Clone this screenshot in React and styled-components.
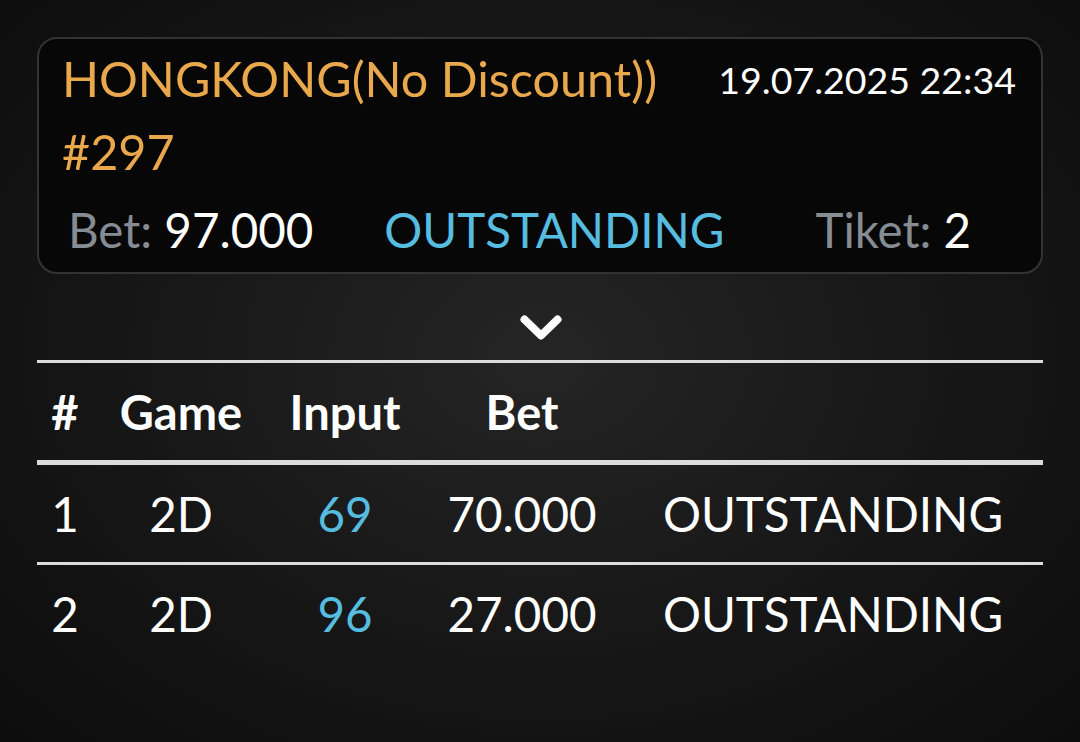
import React from 'react';
import styled, { createGlobalStyle } from 'styled-components';

const GlobalStyle = createGlobalStyle`
  html, body {
    margin: 0;
    padding: 0;
  }

  body {
    min-height: 100vh;
    background: radial-gradient(ellipse 75% 80% at 50% 48%, #252525 0%, #181818 45%, #0b0b0b 100%);
    font-family: Lato, "Open Sans", sans-serif;
    color: #ffffff;
  }
`

const Page = styled.div`
  padding: 37px 37px 0;
`

const Card = styled.div`
  background: #070707;
  border: 2px solid #333333;
  border-radius: 20px;
  padding: 3px 25px 6px 23px;
`

const TopRow = styled.div`
  display: flex;
  justify-content: space-between;
  align-items: flex-start;
`

const Title = styled.div`
  color: #eaa84c;
  font-size: 48.5px;
  line-height: 73px;
`

const DateText = styled.div`
  font-size: 37.5px;
  line-height: 73px;
  margin-top: 1px;
  color: #ffffff;
`

const StatsRow = styled.div`
  display: flex;
  align-items: baseline;
  margin-top: 5px;
  padding-left: 6px;
  font-size: 47.5px;
  line-height: 73px;
`

const Stat = styled.div`
  margin-left: ${(p) => p.$offset || 0}px;
  color: ${(p) => p.$color || '#ffffff'};
  white-space: nowrap;
`

const Label = styled.span`
  color: #868c93;
`

const Toggle = styled.div`
  display: flex;
  justify-content: center;
  padding: 41px 0 19px 2px;

  svg {
    display: block;
  }
`

const Table = styled.div`
  display: flex;
  flex-direction: column;
`

const Row = styled.div`
  display: grid;
  grid-template-columns: 56px 176px 152px 202px 1fr;
  align-items: center;
  height: 97px;
  font-size: ${(p) => (p.$head ? 47 : 47.5)}px;
  font-weight: ${(p) => (p.$head ? 700 : 400)};
  border-top: ${(p) => p.$borderTop || 0}px solid #dcdcdc;
  border-bottom: ${(p) => p.$borderBottom || 0}px solid #dcdcdc;
`

const Cell = styled.div`
  text-align: center;
  white-space: nowrap;
  color: ${(p) => (p.$accent ? '#56bde0' : '#ffffff')};
`

const tickets = [
  { no: 1, game: '2D', input: '69', bet: '70.000', status: 'OUTSTANDING' },
  { no: 2, game: '2D', input: '96', bet: '27.000', status: 'OUTSTANDING' },
];

function App() {
  return (
    <>
      <GlobalStyle />
      <Page>
        <Card>
          <TopRow>
            <Title>
              HONGKONG(No Discount))
              <br />
              #297
            </Title>
            <DateText>19.07.2025 22:34</DateText>
          </TopRow>
          <StatsRow>
            <Stat><Label>Bet:</Label> 97.000</Stat>
            <Stat $offset={71} $color="#56bde0">OUTSTANDING</Stat>
            <Stat $offset={91}><Label>Tiket:</Label> 2</Stat>
          </StatsRow>
        </Card>

        <Toggle>
          <svg width="42" height="26" viewBox="0 0 42 26">
            <polyline
              points="4.5,4.5 21,20.5 37.5,4.5"
              fill="none"
              stroke="#ffffff"
              strokeWidth="8"
              strokeLinecap="round"
              strokeLinejoin="round"
            />
          </svg>
        </Toggle>

        <Table>
          <Row $head $borderTop={3} $borderBottom={5}>
            <Cell>#</Cell>
            <Cell>Game</Cell>
            <Cell>Input</Cell>
            <Cell>Bet</Cell>
            <Cell />
          </Row>
          {tickets.map((t, i) => (
            <Row key={t.no} $borderTop={i > 0 ? 3 : 0}>
              <Cell>{t.no}</Cell>
              <Cell>{t.game}</Cell>
              <Cell $accent>{t.input}</Cell>
              <Cell>{t.bet}</Cell>
              <Cell>{t.status}</Cell>
            </Row>
          ))}
        </Table>
      </Page>
    </>
  );
}

export default App;
